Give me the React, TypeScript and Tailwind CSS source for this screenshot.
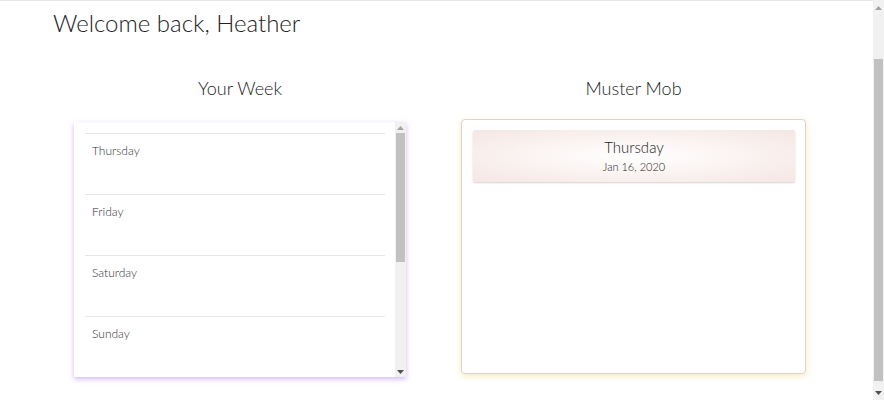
import React from "react";

const font = { fontFamily: "Lato, 'Open Sans', sans-serif" };

function Arrow({ up }: { up?: boolean }) {
  return (
    <svg width="7" height="4" viewBox="0 0 7 4" className="block">
      {up ? <path d="M0 4 L3.5 0 L7 4 Z" fill="#a3a3a3" /> : <path d="M0 0 L3.5 4 L7 0 Z" fill="#505050" />}
    </svg>
  );
}

export default function App() {
  const days = ["Thursday", "Friday", "Saturday", "Sunday"];
  return (
    <div className="w-[884px] h-[400px] flex overflow-hidden bg-white text-[#333]" style={font}>
      <div className="w-[873px] h-[400px] border-t border-[#e8e8e8]">
        <h1 className="pl-[53px] pt-[7px] text-[24px] leading-[29px] font-light text-[#222]">Welcome back, Heather</h1>
        <div className="flex mt-[40px]">
          <div className="ml-[74px] w-[332px] flex flex-col">
            <div className="text-center text-[18px] leading-[22px] font-light text-[#222]">Your Week</div>
            <div className="mt-[23px] h-[255px] bg-white flex shadow-[0_2px_5px_rgba(185,130,255,0.6)]">
              <div className="flex-1 pl-[11px] pr-[10px] pt-[11px] overflow-hidden">
                {days.map((d) => (
                  <div key={d} className="border-t border-[#e6e6e6] h-[61px] pl-[7px] pt-[9px] text-[12px] leading-[15px] font-light text-[#333]">
                    {d}
                  </div>
                ))}
              </div>
              <div className="w-[11px] bg-[#f1f1f1] flex flex-col items-center">
                <div className="h-[11px] flex items-center justify-center"><Arrow up /></div>
                <div className="w-[9px] h-[129px] bg-[#c1c1c1]" />
                <div className="flex-1" />
                <div className="h-[11px] flex items-center justify-center"><Arrow /></div>
              </div>
            </div>
          </div>
          <div className="ml-[55px] w-[345px] flex flex-col">
            <div className="text-center text-[18px] leading-[22px] font-light text-[#222]">Muster Mob</div>
            <div className="mt-[20px] h-[255px] bg-white border border-[#d9d6cf] rounded-[4px] shadow-[0_2px_6px_rgba(240,215,130,0.55)] pt-[10px] pl-[11px] pr-[10px]">
              <div className="h-[52px] flex flex-col items-center shadow-[0_1px_2px_rgba(0,0,0,0.18)] rounded-[2px] bg-[radial-gradient(ellipse_at_center,#ffffff_0%,#faf3f1_50%,#f5e6e3_100%)]">
                <div className="mt-[8px] text-[15px] leading-[18px] font-light text-[#222]">Thursday</div>
                <div className="mt-[4px] text-[11px] leading-[14px] font-light text-[#222]">Jan 16, 2020</div>
              </div>
            </div>
          </div>
        </div>
      </div>
      <div className="w-[11px] h-[400px] bg-[#f1f1f1] flex flex-col items-center">
        <div className="h-[16px] flex items-center justify-center"><Arrow up /></div>
        <div className="mt-[43px] w-[9px] h-[322px] bg-[#c1c1c1]" />
        <div className="flex-1" />
        <div className="h-[14px] flex items-center justify-center"><Arrow /></div>
      </div>
    </div>
  );
}
